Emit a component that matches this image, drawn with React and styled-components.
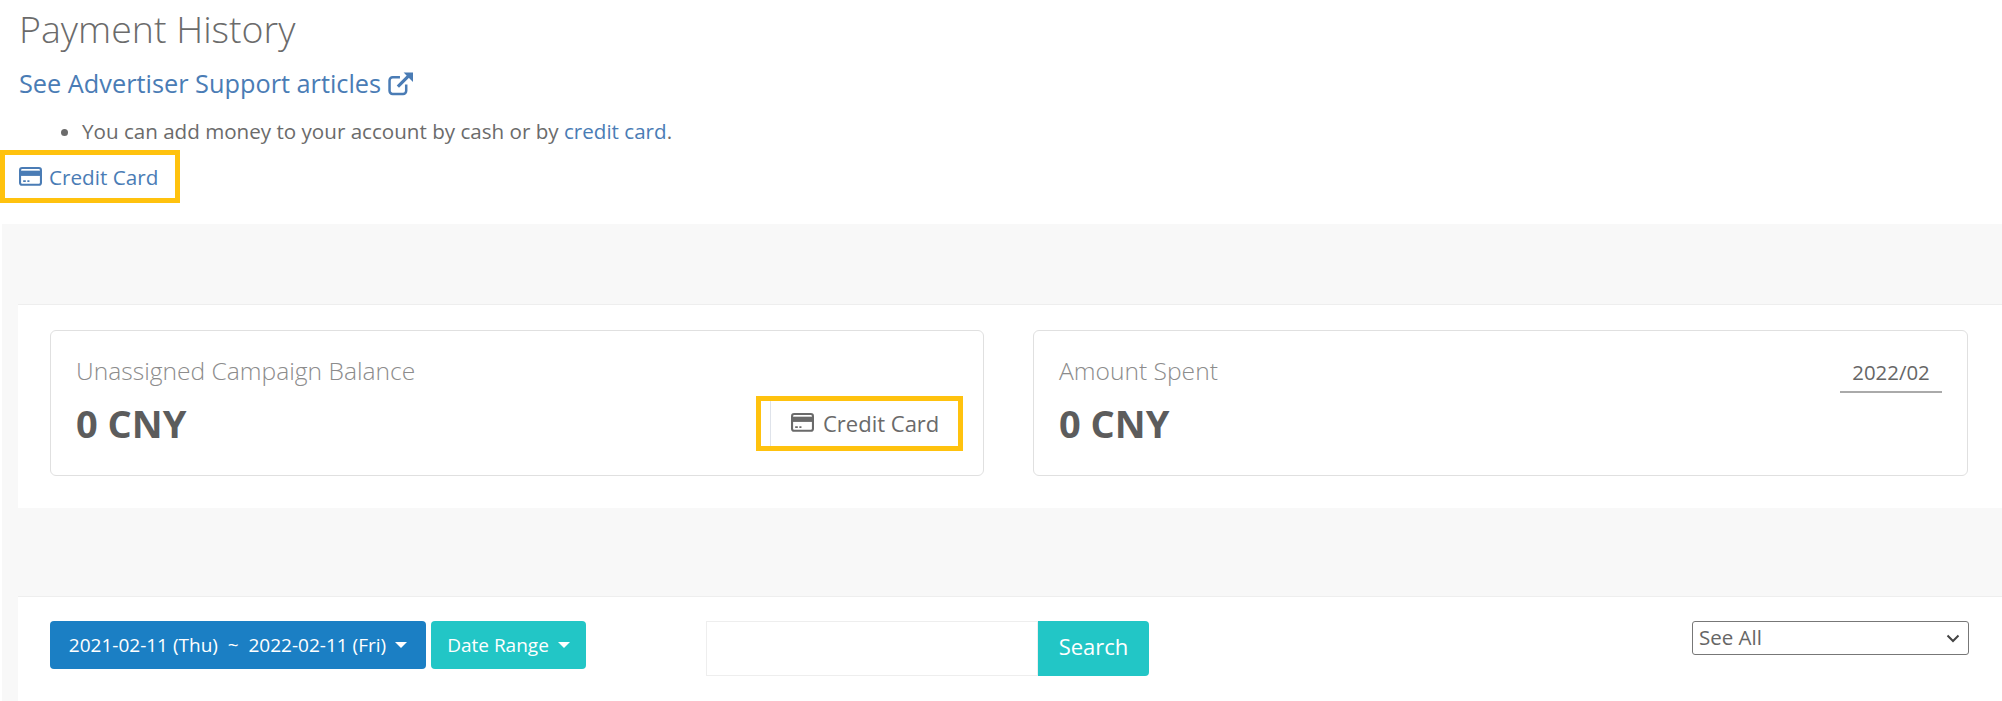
import React from 'react';
import styled, { createGlobalStyle } from 'styled-components';

const CardIcon = ({ size = 23 }) => (
  <svg width={size} height={size * 0.82} viewBox="0 0 22 18" fill="none">
    <rect x="1" y="1" width="20" height="16" rx="2" stroke="currentColor" strokeWidth="2" />
    <rect x="1" y="3.5" width="20" height="5" fill="currentColor" />
    <path d="M4 13.5h2.5M8 13.5h2" stroke="currentColor" strokeWidth="1.5" />
  </svg>
);

const ExternalIcon = () => (
  <svg width="28" height="25" viewBox="0 0 26 24" fill="none">
    <path
      d="M18 13v6a3 3 0 0 1-3 3H5a3 3 0 0 1-3-3V9a3 3 0 0 1 3-3h7"
      stroke="currentColor"
      strokeWidth="2.4"
    />
    <path d="M10 15 22 3" stroke="currentColor" strokeWidth="3" />
    <path d="M15.5 1.5h9v9z" fill="currentColor" />
  </svg>
);

const chevron =
  "url(\"data:image/svg+xml,%3Csvg xmlns='http://www.w3.org/2000/svg' width='14' height='9' viewBox='0 0 14 9'%3E%3Cpath d='M1.5 1.5 7 7l5.5-5.5' fill='none' stroke='%23444' stroke-width='2'/%3E%3C/svg%3E\")";

function App() {
  return (
    <>
      <GlobalStyle />
      <Header>
        <Title>Payment History</Title>
        <SupportLink href="#">
          See Advertiser Support articles
          <ExternalIcon />
        </SupportLink>
        <Notes>
          <li>
            You can add money to your account by cash or by <a href="#">credit card</a>.
          </li>
        </Notes>
        <TopHighlight href="#">
          <CardIcon />
          Credit Card
        </TopHighlight>
      </Header>

      <Section>
        <BalancePanel>
          <Card>
            <CardHead>
              <CardLabel>Unassigned Campaign Balance</CardLabel>
            </CardHead>
            <CardBody>
              <Amount>0 CNY</Amount>
              <CardHighlight>
                <CardButton>
                  <CardIcon />
                  Credit Card
                </CardButton>
              </CardHighlight>
            </CardBody>
          </Card>
          <Card>
            <CardHead>
              <CardLabel>Amount Spent</CardLabel>
              <MonthPicker>2022/02</MonthPicker>
            </CardHead>
            <CardBody>
              <Amount>0 CNY</Amount>
            </CardBody>
          </Card>
        </BalancePanel>

        <FilterPanel>
          <DateGroup>
            <DropButton $color="#1b7fc4" $width={376}>
              2021-02-11 (Thu) &nbsp;~&nbsp; 2022-02-11 (Fri)
              <Caret />
            </DropButton>
            <DropButton $color="#22c6c6" $width={155}>
              Date Range
              <Caret />
            </DropButton>
          </DateGroup>
          <SearchGroup>
            <SearchInput />
            <SearchButton>Search</SearchButton>
          </SearchGroup>
          <FilterSelect>
            <option>See All</option>
          </FilterSelect>
        </FilterPanel>
      </Section>
    </>
  );
}

const GlobalStyle = createGlobalStyle`
  *, *::before, *::after {
    margin: 0;
    padding: 0;
    box-sizing: border-box;
  }

  body {
    font-family: "Open Sans", "Liberation Sans", sans-serif;
    background-color: #fff;
    color: #666;
    height: 701px;
    overflow: hidden;
  }
`;

const Header = styled.div`
  height: 224px;
  display: flex;
  flex-direction: column;
  align-items: flex-start;
`;
const Title = styled.h1`
  margin: 6px 0 0 19px;
  font-size: 37.5px;
  line-height: 46px;
  font-weight: 300;
  color: #6b6b6b;
`;
const SupportLink = styled.a`
  margin: 14px 0 0 19px;
  display: flex;
  align-items: center;
  gap: 6px;
  font-size: 25.3px;
  line-height: 34px;
  color: #4a7cb5;
  text-decoration: none;
`;
const Notes = styled.ul`
  margin: 18px 0 0 82px;
  font-size: 20.6px;
  line-height: 27px;
  color: #6b6b6b;

  a {
    color: #4a7cb5;
    text-decoration: none;
  }
`;
const TopHighlight = styled.a`
  margin-top: 5px;
  width: 180px;
  height: 53px;
  display: flex;
  align-items: center;
  gap: 7px;
  padding-left: 14px;
  border: 5px solid #ffc20e;
  font-size: 20.7px;
  color: #4a7cb5;
  text-decoration: none;
`;

const Section = styled.div`
  margin-left: 2px;
  padding: 80px 0 0 16px;
  height: 477px;
  background-color: #f8f8f8;
`;
const BalancePanel = styled.div`
  display: grid;
  grid-template-columns: 934px 935px;
  column-gap: 49px;
  height: 204px;
  padding: 25px 34px 0 32px;
  background-color: #fff;
  border-top: 1px solid #eeeeee;
`;
const Card = styled.div`
  height: 146px;
  padding: 21px 25px 0;
  border: 1px solid #e0e0e0;
  border-radius: 6px;
  background-color: #fff;
`;
const CardHead = styled.div`
  display: flex;
  justify-content: space-between;
  align-items: flex-start;
  height: 39px;
  margin-bottom: 5px;
`;
const CardBody = styled.div`
  display: flex;
  justify-content: space-between;
  align-items: center;
  height: 55px;
`;
const CardLabel = styled.div`
  font-size: 24.6px;
  line-height: 38px;
  font-weight: 300;
  color: #8c8c8c;
`;
const Amount = styled.div`
  margin-top: -2px;
  font-size: 38px;
  line-height: 50px;
  font-weight: 700;
  color: #5c5c5c;
`;
const CardHighlight = styled.div`
  margin-right: -5px;
  width: 207px;
  height: 55px;
  padding-left: 9px;
  border: 5px solid #ffc20e;
`;
const CardButton = styled.div`
  height: 100%;
  display: flex;
  align-items: center;
  gap: 9px;
  padding: 0 0 2px 20px;
  border-left: 1px solid #dfe3ea;
  font-size: 22px;
  color: #6a6a6a;
`;
const MonthPicker = styled.div`
  width: 102px;
  height: 41px;
  text-align: center;
  font-size: 20.4px;
  line-height: 40px;
  color: #666;
  border-bottom: 2px solid #aaaaaa;
`;

const FilterPanel = styled.div`
  margin-top: 88px;
  height: 105px;
  display: flex;
  align-items: flex-start;
  padding: 24px 33px 0 32px;
  background-color: #fff;
  border-top: 1px solid #eeeeee;
`;
const DateGroup = styled.div`
  display: flex;
  gap: 5px;
`;
const DropButton = styled.button`
  width: ${(p) => p.$width}px;
  height: 48px;
  display: flex;
  align-items: center;
  justify-content: center;
  gap: 9px;
  border: none;
  border-radius: 4px;
  background-color: ${(p) => p.$color};
  color: #fff;
  font-family: inherit;
  font-size: 19px;
  white-space: nowrap;
`;
const Caret = styled.span`
  width: 0;
  height: 0;
  border-left: 6px solid transparent;
  border-right: 6px solid transparent;
  border-top: 6px solid #fff;
`;
const SearchGroup = styled.div`
  margin-left: 120px;
  display: flex;
`;
const SearchInput = styled.input`
  width: 332px;
  height: 55px;
  background: #fff;
  border: 1px solid #eeeeee;
  outline: none;
`;
const SearchButton = styled.button`
  width: 111px;
  height: 55px;
  padding-bottom: 6px;
  border: none;
  border-radius: 0 4px 4px 0;
  background-color: #22c6c6;
  color: #fff;
  font-family: inherit;
  font-size: 22px;
`;
const FilterSelect = styled.select`
  margin-left: auto;
  width: 277px;
  height: 34px;
  padding: 0 0 2px 6px;
  appearance: none;
  background: #fff ${chevron} no-repeat right 8px center;
  border: 1px solid #777;
  border-radius: 3px;
  font-family: inherit;
  font-size: 20.5px;
  line-height: 30px;
  color: #666;
`;

export default App;
